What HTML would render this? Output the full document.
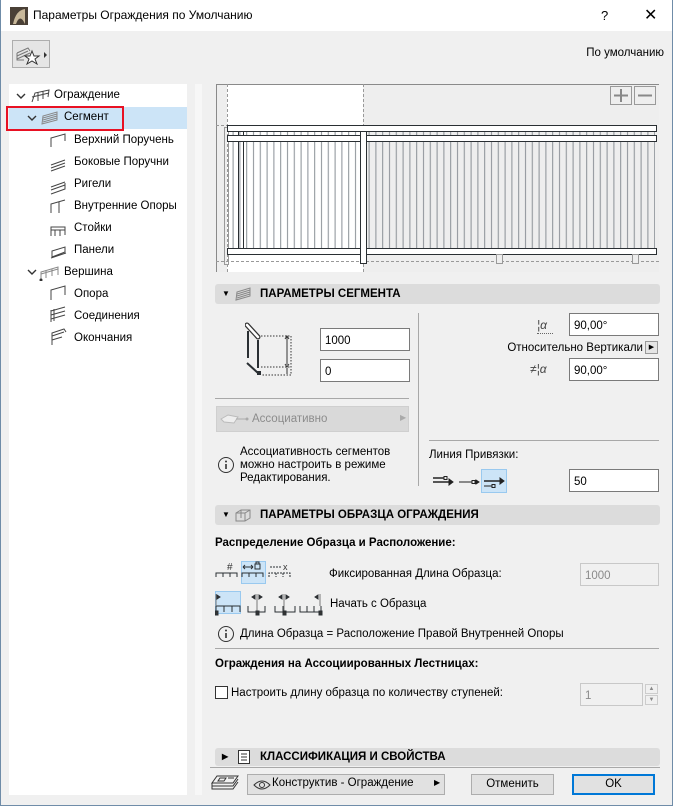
<!DOCTYPE html>
<html><head><meta charset="utf-8">
<style>
*{box-sizing:border-box;margin:0;padding:0}
body{width:673px;height:806px;background:#f0f0f0;font-family:"Liberation Sans",sans-serif;font-size:11.5px;color:#000;position:relative;overflow:hidden}
.a{position:absolute;white-space:nowrap}
.win{position:absolute;left:0;top:0;width:673px;height:806px;border:1px solid #6f8ca8;border-top:none}
.title{position:absolute;left:0;top:0;width:673px;height:31px;background:#fff}
.tree{position:absolute;left:9px;top:84px;width:178px;height:711px;background:#fff}
.ti{position:absolute;height:22px;line-height:22px}
.bar{position:absolute;left:215px;width:445px;height:20px;background:#dcdcdc;border-radius:3px;font-weight:bold;font-size:11.5px;line-height:20px}
.fld{position:absolute;background:#fff;border:1px solid #7a7a7a;height:23px;line-height:22px;padding-left:4px;padding-top:1px}
.dis{background:#f0f0f0;border-color:#c8c8c8;color:#8a8a8a}
.hl{position:absolute;height:1px;background:#a8a8a8}
.btn{position:absolute;border:1px solid #adadad;background:#e1e1e1;text-align:center;line-height:19px;height:21px}
.chev{position:absolute}
</style></head><body>
<div class="title"></div>
<svg class="a" style="left:10px;top:7px" width="18" height="18"><rect width="18" height="18" fill="#4a4036"/><path d="M3 17 Q6 3 15 2 L15 17 Q10 6 6 17Z" fill="#c8b89a"/></svg>
<div class="a" style="left:33px;top:8px;font-size:12px">Параметры Ограждения по Умолчанию</div>
<div class="a" style="left:601px;top:8px;font-size:13px">?</div>
<div class="a" style="left:644px;top:5px;font-size:16px">✕</div>

<div class="a" style="left:12px;top:40px;width:38px;height:28px;border:1px solid #adadad;background:#e5e5e5"></div>
<svg class="a" style="left:16px;top:45px" width="32" height="20"><path d="M1 8 L12 3 L14 6 M1 11 L12 6 M1 14 L14 8 M1 8 V15 L8 15" stroke="#777" fill="none"/><path d="M16 6 L18 11 L23 11 L19 14 L21 19 L16 16 L11 19 L13 14 L9 11 L14 11Z" stroke="#333" fill="#fff"/><path d="M28 7 L31 10 L28 13Z" fill="#333"/></svg>
<div class="a" style="right:9px;top:47px">По умолчанию</div>

<div class="tree"></div>
<div class="a" style="left:195px;top:84px;width:7px;height:711px;background:#f7f7f7"></div>
<div class="a" style="left:9px;top:107px;width:178px;height:22px;background:#cce4f7"></div>
<div class="a" style="left:6px;top:106px;width:118px;height:25px;border:2px solid #e81123"></div>
<svg class="chev" style="left:16px;top:92px" width="10" height="8"><path d="M1 2 L5 6 L9 2" stroke="#333" stroke-width="1.4" fill="none"/></svg>
<svg class="a" style="left:31px;top:89px" width="20" height="14"><path d="M1 13 L4 4 L18 1 L17 8 M1 8 L18 4 M7 3 V12 M12 2 V10" stroke="#444" fill="none"/></svg>
<div class="ti a" style="left:54px;top:84px">Ограждение</div>
<svg class="chev" style="left:27px;top:114px" width="10" height="8"><path d="M1 2 L5 6 L9 2" stroke="#333" stroke-width="1.4" fill="none"/></svg>
<svg class="a" style="left:41px;top:111px" width="18" height="14"><path d="M1 13 L2 5 L16 1 L16 9 Z M2 7 L16 3 M2 9 L16 5 M2 11 L16 7" stroke="#888" fill="none"/></svg>
<div class="ti a" style="left:64px;top:106px">Сегмент</div>
<svg class="a" style="left:50px;top:133px" width="18" height="150" stroke="#444" fill="none">
<path d="M1 14 V5 L15 1 V8"/>
<path d="M1 32 L15 27 M1 35 L15 30 M1 38 L15 33"/>
<path d="M1 54 L15 49 M1 57 L15 52 M1 61 L15 56 V50"/>
<path d="M1 80 V71 L15 67 M9 69 V80"/>
<path d="M1 103 V94 H15 V102 M1 97 H15 M5 97 V103 M10 97 V103"/>
<path d="M2 124 V118 L15 114 V119 L2 124Z M1 125 L16 120"/>
</svg>
<div class="ti a" style="left:74px;top:129px">Верхний Поручень</div>
<div class="ti a" style="left:74px;top:151px">Боковые Поручни</div>
<div class="ti a" style="left:74px;top:173px">Ригели</div>
<div class="ti a" style="left:74px;top:195px">Внутренние Опоры</div>
<div class="ti a" style="left:74px;top:217px">Стойки</div>
<div class="ti a" style="left:74px;top:239px">Панели</div>
<svg class="chev" style="left:27px;top:268px" width="10" height="8"><path d="M1 2 L5 6 L9 2" stroke="#333" stroke-width="1.4" fill="none"/></svg>
<svg class="a" style="left:38px;top:265px" width="22" height="16"><path d="M3 15 V7 L20 2 V10 M3 9 L20 4 M8 5 V13 M14 4 V11" stroke="#888" fill="none"/><circle cx="3" cy="15" r="1.5" fill="#333"/></svg>
<div class="ti a" style="left:64px;top:261px">Вершина</div>
<svg class="a" style="left:50px;top:285px" width="18" height="64" stroke="#444" fill="none">
<path d="M1 15 V5 L15 1 V10"/>
<path d="M1 37 V25 M4 36 V24 M1 26 L15 22 M1 30 L15 26 M1 34 L15 30"/>
<path d="M2 60 V48 L14 44 L16 47 M2 51 L14 47 M2 55 L12 52"/>
</svg>
<div class="ti a" style="left:74px;top:283px">Опора</div>
<div class="ti a" style="left:74px;top:305px">Соединения</div>
<div class="ti a" style="left:74px;top:327px">Окончания</div>

<!-- preview -->
<svg class="a" style="left:216px;top:84px" width="443" height="188">
<defs><pattern id="bal" x="0" y="0" width="6.8" height="200" patternUnits="userSpaceOnUse"><rect x="3" y="0" width="1" height="200" fill="#8a9096"/></pattern></defs>
<rect width="443" height="188" fill="#eeeeee"/>
<rect x="11" width="136" height="188" fill="#fff"/>
<path d="M0.5 0 V188 M0 0.5 H443" stroke="#8a8a8a"/>
<path d="M11.5 0 V188 M147.5 0 V188 M0 41.5 H11 M0 177.5 H443" stroke="#999" stroke-dasharray="3,2"/>
<rect x="12" y="57" width="427" height="107" fill="url(#bal)"/>
<rect x="12" y="47" width="427" height="4" fill="url(#bal)"/>
<rect x="8.5" y="43.5" width="4" height="137" fill="none" stroke="#999"/>
<path d="M22.5 47 V164 M27.5 47 V164" stroke="#2a2f33"/>
<rect x="11.5" y="41.5" width="429" height="6" fill="#fff" stroke="#2a2f33"/>
<rect x="11.5" y="51.5" width="429" height="6" fill="#fff" stroke="#2a2f33"/>
<rect x="11.5" y="164.5" width="429" height="6" fill="#fff" stroke="#2a2f33"/>
<rect x="144.5" y="47.5" width="6" height="132" fill="#fff" stroke="#2a2f33"/>
<rect x="280.5" y="170.5" width="6" height="9" fill="#eee" stroke="#999"/>
<rect x="416.5" y="170.5" width="6" height="9" fill="#eee" stroke="#999"/>
<rect x="394.5" y="2.5" width="21" height="18" fill="#eee" stroke="#999"/>
<rect x="418.5" y="2.5" width="21" height="18" fill="#eee" stroke="#999"/>
<path d="M398 11.5 H412 M405 5 V18 M422 11.5 H436" stroke="#888" stroke-width="2"/>
</svg>

<!-- segment section -->
<div class="bar" style="top:284px"><span class="a" style="left:7px;top:0;font-size:8px">▼</span>
<svg class="a" style="left:20px;top:3px" width="16" height="14"><path d="M1 13 L2 5 L15 1 L15 9 Z M2 7 L15 3 M2 9 L15 5 M2 11 L15 7" stroke="#888" fill="none"/></svg>
<span class="a" style="left:45px;top:0">ПАРАМЕТРЫ СЕГМЕНТА</span></div>
<svg class="a" style="left:245px;top:320px" width="55" height="60"><path d="M2 5 L13 17" stroke="#333" stroke-width="5" stroke-linecap="round"/><path d="M2 5 L13 17" stroke="#fff" stroke-width="2.5" stroke-linecap="round"/><path d="M3 11 V38 M13 20 V48 M2 43 L13 53" stroke="#2a2f33" stroke-width="2"/><rect x="12" y="51" width="4" height="4" fill="#2a2f33"/><path d="M16 16 H46 V55 H16 M16 47 H46" stroke="#333" stroke-dasharray="1.5,1.5" fill="none"/><path d="M42 17 V45 M42 48 V54" stroke="#333"/><path d="M40 19 L42 16 L44 19 M40 44 L42 47 L44 44" stroke="#333" fill="none"/></svg>
<div class="fld" style="left:320px;top:328px;width:90px">1000</div>
<div class="fld" style="left:320px;top:359px;width:90px">0</div>
<div class="hl" style="left:215px;top:398px;width:194px"></div>
<div class="a" style="left:418px;top:313px;width:1px;height:173px;background:#a8a8a8"></div>
<div class="a" style="left:216px;top:406px;width:193px;height:26px;background:#d9d9d9;border:1px solid #cfcfcf"></div>
<svg class="a" style="left:220px;top:412px" width="30" height="14"><path d="M1 7 L8 3 L18 5 L14 11 L4 10 Z" fill="#eee" stroke="#bbb"/><path d="M16 7 H26" stroke="#aaa"/><circle cx="27" cy="7" r="1.5" fill="#aaa"/></svg>
<div class="a" style="left:252px;top:413px;color:#8c8c8c">Ассоциативно</div>
<div class="a" style="left:400px;top:413px;color:#aaa;font-size:8px">▶</div>
<svg class="a" style="left:217px;top:456px" width="18" height="18"><circle cx="9" cy="9" r="7.5" stroke="#333" fill="none"/><path d="M9 8 V13" stroke="#333" stroke-width="1.6"/><circle cx="9" cy="5.5" r="1" fill="#333"/></svg>
<div class="a" style="left:240px;top:446px;line-height:13px">Ассоциативность сегментов<br>можно настроить в режиме<br>Редактирования.</div>

<div class="a" style="left:537px;top:318px;font-size:12px;color:#444;font-style:italic">¦α</div>
<div class="a" style="left:537px;top:333px;width:16px;height:1px;border-top:1px dotted #666"></div>
<div class="fld" style="left:569px;top:313px;width:90px">90,00°</div>
<div class="a" style="right:30px;top:342px">Относительно Вертикали</div>
<div class="a" style="left:645px;top:341px;width:13px;height:13px;border:1px solid #999;background:#e5e5e5;font-size:7px;line-height:11px;text-align:center">▶</div>
<div class="a" style="left:530px;top:362px;font-size:12px;color:#444;font-style:italic">≠¦α</div>
<div class="fld" style="left:569px;top:358px;width:90px">90,00°</div>
<div class="hl" style="left:429px;top:440px;width:230px"></div>
<div class="a" style="left:429px;top:449px">Линия Привязки:</div>
<div class="a" style="left:481px;top:469px;width:26px;height:24px;background:#cce4f7;border:1px solid #99c9ef"></div>
<svg class="a" style="left:432px;top:472px" width="76" height="20" stroke="#222" fill="none"><path d="M1 6 H12 M1 10 H20" stroke-width="1.6"/><path d="M17 7 L21 10 L17 13Z" fill="#222"/><rect x="12" y="4.5" width="3" height="3"/><path d="M27 10 H40"/><rect x="40" y="8.5" width="3" height="3"/><path d="M44 8 L47 10 L44 12Z" fill="#222"/><path d="M52 9 H71" stroke-width="1.6"/><path d="M68 6 L72 9 L68 12Z" fill="#222"/><path d="M52 14 H60"/><rect x="60" y="12.5" width="3" height="3"/></svg>
<div class="fld" style="left:569px;top:469px;width:90px">50</div>

<!-- pattern section -->
<div class="bar" style="top:505px"><span class="a" style="left:7px;top:0;font-size:8px">▼</span>
<svg class="a" style="left:20px;top:3px" width="16" height="14"><path d="M1 13 V5 L6 2 H15 V10 L10 13 Z M6 2 V10 M10 5 V13 M1 5 H10 L15 2" stroke="#888" fill="none"/></svg>
<span class="a" style="left:45px;top:0">ПАРАМЕТРЫ ОБРАЗЦА ОГРАЖДЕНИЯ</span></div>
<div class="a" style="left:215px;top:537px;font-weight:bold">Распределение Образца и Расположение:</div>
<div class="a" style="left:241px;top:561px;width:25px;height:23px;background:#cce4f7;border:1px solid #99c9ef"></div>
<div class="a" style="left:215px;top:591px;width:26px;height:23px;background:#cce4f7;border:1px solid #99c9ef"></div>
<svg class="a" style="left:215px;top:560px" width="110" height="58" stroke="#2a2f33" fill="none">
<path d="M1 17 V13 H22 V17 M8 13 V17 M15 13 V17"/><text x="12" y="10" font-size="10" fill="#333" stroke="none" font-family="Liberation Sans">#</text>
<path d="M27 17 V13 H48 V17 M34 13 V17 M41 13 V17 M28 7 H38 M28 7 L30 5 M28 7 L30 9 M38 7 L36 5 M38 7 L36 9"/><rect x="40" y="4" width="5" height="5"/><path d="M41 4 V2 H44 V4"/>
<path d="M54 17 V13 H75 V17 M61 13 V17 M68 13 V17 M55 7 H66" stroke-dasharray="2,1"/><text x="68" y="10" font-size="9" fill="#333" stroke="none" font-family="Liberation Sans">x</text>
<path d="M1 52 V46 H25 V52 M9 46 V52 M17 46 V52 M33 46 V52 H50 V46 M42 46 V52 M60 46 V52 H80 V46 M68 46 V52 M85 46 V52 H106 V46 M92 46 V52 M99 46 V52"/>
<path d="M1 34 V46 M42 34 V52 M69 34 V52 M105 34 V46" stroke="#777"/>
<path d="M2 35 L5 37 L2 39Z M40 35 L37 37 L40 39Z M44 35 L47 37 L44 39Z M67 35 L64 37 L67 39Z M71 35 L74 37 L71 39Z M103 35 L100 37 L103 39Z" fill="#333"/>
<rect x="0" y="51" width="3" height="4" fill="#333"/><rect x="41" y="51" width="3" height="4" fill="#333"/><rect x="68" y="51" width="3" height="4" fill="#333"/><rect x="104" y="51" width="3" height="4" fill="#333"/>
</svg>
<div class="a" style="left:329px;top:568px">Фиксированная Длина Образца:</div>
<div class="fld dis" style="left:580px;top:563px;width:79px">1000</div>
<div class="a" style="left:330px;top:598px">Начать с Образца</div>
<svg class="a" style="left:217px;top:625px" width="18" height="18"><circle cx="9" cy="9" r="7.5" stroke="#333" fill="none"/><path d="M9 8 V13" stroke="#333" stroke-width="1.6"/><circle cx="9" cy="5.5" r="1" fill="#333"/></svg>
<div class="a" style="left:240px;top:628px">Длина Образца = Расположение Правой Внутренней Опоры</div>
<div class="hl" style="left:215px;top:648px;width:444px"></div>
<div class="a" style="left:215px;top:658px;font-weight:bold">Ограждения на Ассоциированных Лестницах:</div>
<div class="a" style="left:215px;top:686px;width:13px;height:13px;border:1px solid #333;background:#fff"></div>
<div class="a" style="left:231px;top:687px">Настроить длину образца по количеству ступеней:</div>
<div class="fld dis" style="left:580px;top:683px;width:63px">1</div>
<div class="a" style="left:645px;top:684px;width:13px;height:10px;border:1px solid #ccc;font-size:6px;text-align:center;line-height:8px;color:#888">▲</div>
<div class="a" style="left:645px;top:695px;width:13px;height:10px;border:1px solid #ccc;font-size:6px;text-align:center;line-height:8px;color:#888">▼</div>

<div class="bar" style="top:748px;height:18px;line-height:18px"><span class="a" style="left:7px;top:0;font-size:8px">▶</span>
<svg class="a" style="left:23px;top:2px" width="12" height="14"><rect x="0.5" y="0.5" width="11" height="13" fill="#fff" stroke="#333"/><path d="M3 4 H9 M3 7 H9 M3 10 H9" stroke="#333"/></svg>
<span class="a" style="left:45px;top:0">КЛАССИФИКАЦИЯ И СВОЙСТВА</span></div>
<div class="hl" style="left:210px;top:767px;width:450px"></div>

<svg class="a" style="left:211px;top:775px" width="28" height="18" stroke="#333" fill="none"><path d="M6 1 H27 L22 8 H1 Z M1 8 V11 H22 L27 4 M1 11 V14 H22 L27 7 M9 3 H15 L13 6 H7Z M17 3 H23"/></svg>
<div class="a" style="left:247px;top:774px;width:198px;height:21px;border:1px solid #adadad;background:#e1e1e1"></div>
<svg class="a" style="left:253px;top:779px" width="18" height="12"><path d="M1 6 Q9 -2 17 6 Q9 14 1 6Z" stroke="#333" fill="none"/><circle cx="9" cy="6" r="2.5" stroke="#333" fill="none"/></svg>
<div class="a" style="left:272px;top:777px">Конструктив - Ограждение</div>
<div class="a" style="left:434px;top:778px;font-size:8px">▶</div>
<div class="btn" style="left:471px;top:774px;width:83px">Отменить</div>
<div class="btn" style="left:572px;top:774px;width:83px;border:2px solid #0078d7;line-height:17px">OK</div>
<div class="win"></div>
</body></html>
